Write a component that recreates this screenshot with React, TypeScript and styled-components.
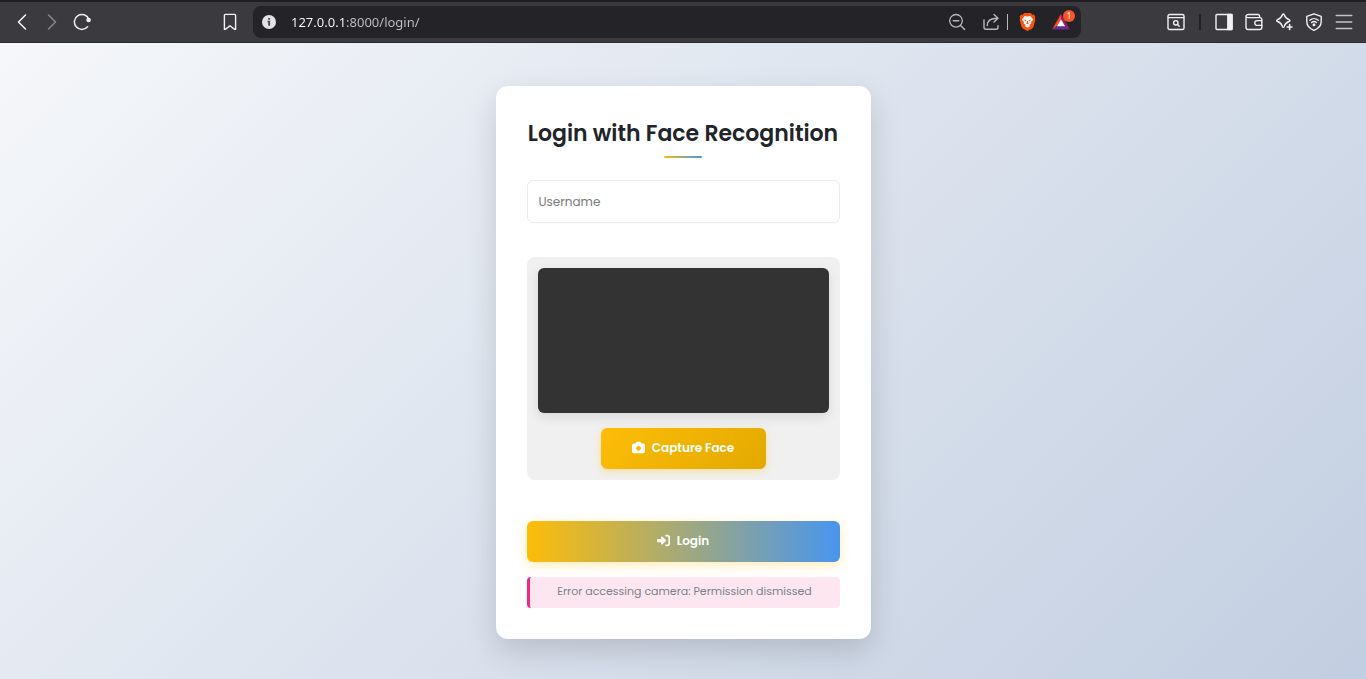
import React from "react";
import styled, { createGlobalStyle } from "styled-components";
import { FaCamera, FaRightToBracket } from "react-icons/fa6";

const GlobalStyle = createGlobalStyle`
  *, *::before, *::after { box-sizing: border-box; }
  body { margin: 0; font-family: Poppins, Inter, sans-serif; }
  button, input { font: inherit; }
`;

const Window = styled.div`
  min-height: 100vh;
  display: flex;
  flex-direction: column;
`;

const Toolbar = styled.header`
  display: grid;
  grid-template-columns: minmax(180px, 253fr) minmax(0, 828fr) minmax(240px, 285fr);
  align-items: center;
  height: 43px;
  padding-bottom: 1px;
  background: #3b3a3f;
  border-top: 2px solid #1f1e23;
  border-bottom: 1px solid #2c2b30;
`;

const ToolGroup = styled.div<{ $side: "left" | "right" }>`
  display: flex;
  align-items: center;
  justify-content: ${(p) => (p.$side === "left" ? "flex-start" : "flex-end")};
  padding: ${(p) => (p.$side === "left" ? "0 8px 0 7px" : "0 7px 0 8px")};
`;

const Spacer = styled.span`
  flex: 1;
`;

const ToolButton = styled.button<{ $dim?: boolean }>`
  display: flex;
  align-items: center;
  justify-content: center;
  width: 30px;
  height: 30px;
  padding: 0;
  border: 0;
  background: none;
  color: ${(p) => (p.$dim ? "#85848a" : "#f1f1f4")};
`;

const ToolDivider = styled.span`
  width: 2px;
  height: 16px;
  margin: 0 8px;
  background: #222126;
`;

const AddressBar = styled.div`
  display: flex;
  align-items: center;
  height: 32px;
  padding: 0 11px 0 8px;
  border-radius: 8px;
  background: #242328;
`;

const AddressButton = styled.button<{ $gap?: number }>`
  position: relative;
  display: flex;
  flex: none;
  padding: 0;
  margin-left: ${(p) => p.$gap ?? 0}px;
  border: 0;
  background: none;
  color: #b9b8be;
`;

const AddressInput = styled.input`
  flex: 1;
  min-width: 0;
  margin-left: 14px;
  padding: 0;
  border: 0;
  outline: 0;
  font-family: "Noto Sans", sans-serif;
  font-size: 13px;
  line-height: 20px;
  color: #ffffff;
  background: linear-gradient(90deg, #ffffff 53px, #c3c2c8 53px);
  -webkit-background-clip: text;
  background-clip: text;
  -webkit-text-fill-color: transparent;
`;

const AddressDivider = styled.span`
  width: 1px;
  height: 16px;
  margin-left: 7px;
  background: #b9b8be;
`;

const Badge = styled.span`
  position: absolute;
  top: -4px;
  right: -5px;
  width: 12px;
  height: 12px;
  border-radius: 6px;
  background: #fb542b;
  color: #ffffff;
  font-family: "Noto Sans", sans-serif;
  font-size: 8px;
  line-height: 12px;
  text-align: center;
`;

const Page = styled.main`
  flex: 1;
  display: flex;
  justify-content: center;
  align-items: flex-start;
  padding: 43px 20px 40px;
  background: linear-gradient(135deg, #f5f7fa 0%, #c2cee1 100%);
`;

const Card = styled.form`
  width: 100%;
  max-width: 375px;
  padding: 31px;
  border-radius: 12px;
  background: #ffffff;
  box-shadow: 0 12px 31px rgba(0, 0, 0, 0.15);
`;

const Title = styled.h1`
  display: flex;
  flex-direction: column;
  align-items: center;
  gap: 5px;
  margin: 0 0 22px;
  font-size: 22px;
  font-weight: 600;
  line-height: 34px;
  white-space: nowrap;
  color: #212529;

  &::after {
    content: "";
    width: 38px;
    height: 2px;
    border-radius: 2px;
    background: linear-gradient(to right, #fdbd08, #4895ef);
  }
`;

const Field = styled.input`
  display: block;
  width: 100%;
  height: 43px;
  padding: 0 11px;
  border: 1px solid #e9ebec;
  border-radius: 6px;
  outline: 0;
  background: #ffffff;
  font-size: 12px;
  color: #212529;

  &::placeholder { color: #7b7b7b; opacity: 1; }
`;

const CameraPanel = styled.section`
  display: flex;
  flex-direction: column;
  align-items: center;
  gap: 15px;
  margin: 34px 0 41px;
  padding: 11px;
  border-radius: 8px;
  background: #f0f0f0;
`;

const Preview = styled.video`
  display: block;
  width: 100%;
  height: 145px;
  border-radius: 6px;
  background: #333333;
  box-shadow: 0 4px 12px rgba(0, 0, 0, 0.1);
`;

const ActionButton = styled.button<{ $wide?: boolean }>`
  display: flex;
  align-items: center;
  justify-content: center;
  gap: 7px;
  width: ${(p) => (p.$wide ? "100%" : "165px")};
  height: 41px;
  padding: 0 0 2px;
  border: 0;
  border-radius: 6px;
  font-size: 12px;
  font-weight: 600;
  color: #ffffff;
  background: ${(p) =>
    p.$wide
      ? "linear-gradient(to right, #fdbd08, #4895ef)"
      : "linear-gradient(135deg, #fdbd08, #e3a900)"};
  box-shadow: ${(p) =>
    p.$wide
      ? "0 3px 12px rgba(253, 189, 8, 0.3)"
      : "0 3px 8px rgba(253, 189, 8, 0.3)"};
`;

const ErrorMessage = styled.p`
  margin: 15px 0 0;
  padding: 0 8px 2px;
  border-left: 3px solid #f72585;
  border-radius: 4px;
  background: #fde6f0;
  font-size: 11px;
  line-height: 29px;
  text-align: center;
  color: #7a828a;
`;

type DrawingProps = { size?: number; children: React.ReactNode };

const Line = ({ size = 18, children }: DrawingProps) => (
  <svg
    width={size}
    height={size}
    viewBox="0 0 18 18"
    fill="none"
    stroke="currentColor"
    strokeWidth="1.4"
    strokeLinecap="round"
    strokeLinejoin="round"
    aria-hidden="true"
  >
    {children}
  </svg>
);

export default function App() {
  return (
    <>
      <GlobalStyle />
      <Window>
        <Toolbar>
          <ToolGroup $side="left">
            <ToolButton aria-label="Back">
              <Line><path d="M12.5 2 5.500 9l7 7" strokeWidth="1.6" /></Line>
            </ToolButton>
            <ToolButton aria-label="Forward" $dim>
              <Line><path d="m5.500 2 7 7-7 7" strokeWidth="1.6" /></Line>
            </ToolButton>
            <ToolButton aria-label="Reload">
              <Line>
                <path d="M14.600 13.800A7.500 7.500 0 1 1 15.800 6" strokeWidth="1.5" />
                <circle cx="15.600" cy="7" r="1.600" fill="currentColor" />
              </Line>
            </ToolButton>
            <Spacer />
            <ToolButton aria-label="Bookmark this page">
              <Line><path d="M3.4 2.6c0-.7.5-1.2 1.2-1.2h8.8c.7 0 1.2.5 1.2 1.2v13.8h-1L9 12.8l-4.6 3.6h-1z" /></Line>
            </ToolButton>
          </ToolGroup>

          <AddressBar>
            <AddressButton type="button" aria-label="Site information">
              <svg width="16" height="16" viewBox="0 0 16 16" aria-hidden="true">
                <circle cx="8" cy="8" r="7" fill="#e3e2e7" />
                <path d="M7.2 4h1.9v1.7H7.2zM6.5 6.8h2.6v5H7.2V8.2h-.7z" fill="#4b4a50" />
              </svg>
            </AddressButton>
            <AddressInput aria-label="Address" type="text" defaultValue="127.0.0.1:8000/login/" />
            <AddressButton type="button" aria-label="Zoom">
              <Line>
                <circle cx="8" cy="7.8" r="6.3" strokeWidth="1.3" />
                <path d="M5.3 7.8h5.4M12.6 12.4l4 4" />
              </Line>
            </AddressButton>
            <AddressButton type="button" aria-label="Share" $gap={16}>
              <Line>
                <path d="M2 7v7.2c0 1.3.8 2 2 2h10c1.2 0 2-.7 2-2v-1.4" />
                <path d="M5.2 12.6c0-4.8 3-7.4 10.4-7.4M12 1.6l4 3.6-4 3.8" />
              </Line>
            </AddressButton>
            <AddressDivider />
            <AddressButton type="button" aria-label="Brave Shields" $gap={11}>
              <svg width="17" height="18" viewBox="0 0 17 18" aria-hidden="true">
                <path d="M5.3 0h6.4l1.6 1.7 1.5-.1 1.5 2-.5 1.5.6 1.7-2 7.1-1.6 1.8L8.5 18l-4.3-2.3-1.6-1.8-2-7.1.6-1.7-.5-1.5 1.5-2 1.5.1z" fill="#fb5410" />
                <path d="M5.8 3 8.5 3.5 11.2 3l2.9 3.4-2 2.7.2 1.2-2.1 1.6 1 1.1-2.7 1.8-2.7-1.8 1-1.1-2.1-1.6.2-1.2-2-2.7z" fill="#fff" />
                <path d="m4.6 6.5 2.6.6-.4 1.5zM12.4 6.5l-2.6.6.4 1.5zM8 8h1v1.600l1 .7-1.5.9-1.5-.9 1-.7z" fill="#fb5410" />
              </svg>
            </AddressButton>
            <AddressButton type="button" aria-label="Brave Rewards, 1 notification" $gap={16}>
              <svg width="18" height="16" viewBox="0 0 18 16" aria-hidden="true">
                <path d="M9 0v5.4L5 12l-5 3.6z" fill="#ff4724" />
                <path d="m9 0 9 15.6-5-3.6L9 5.4z" fill="#9e1f63" />
                <path d="M0 15.6 5 12h8l5 3.6z" fill="#662d91" />
                <path d="m9 5.2 4.1 7H4.9z" fill="#fff" />
              </svg>
              <Badge>1</Badge>
            </AddressButton>
          </AddressBar>

          <ToolGroup $side="right">
            <ToolButton aria-label="Search tabs">
              <Line>
                <rect x="1" y="1.5" width="16" height="15" rx="1.6" />
                <path d="M1.2 4.6h15.6" />
                <circle cx="8.8" cy="9.8" r="2.2" />
                <path d="m10.6 11.6 1.6 1.6" />
              </Line>
            </ToolButton>
            <ToolDivider />
            <ToolButton aria-label="Side panel">
              <Line>
                <rect x="1" y="1.5" width="16" height="15" rx="1" />
                <path d="M12.8 1.5H17v15h-4.2z" fill="currentColor" />
              </Line>
            </ToolButton>
            <ToolButton aria-label="Wallet">
              <Line>
                <path d="M14.600 4.600V3.200c0-1-.7-1.700-1.700-1.700H3.400C2.100 1.500 1 2.200 1 3.400v10.800c0 1.300.9 2.300 2.200 2.300h11.400c1.300 0 2.200-.8 2.200-2V6.600c0-1.200-.9-2-2.200-2H3C1.900 4.600 1.200 4.100 1 3.300" />
                <path d="M16.800 7.600h-4.600a2.400 2.400 0 0 0 0 4.800h4.600" />
              </Line>
            </ToolButton>
            <ToolButton aria-label="Leo AI">
              <Line>
                <path d="M8.300 1c.5 0 .7.300.9.800 1 3 1.800 3.800 4.800 4.900 1.300.5 1.300 1.300 0 1.800-3 1.100-3.800 1.900-4.800 4.900-.5 1.300-1.300 1.300-1.800 0-1-3-1.800-3.800-4.800-4.900-1.300-.5-1.300-1.300 0-1.800 3-1.100 3.800-1.900 4.800-4.900.2-.5.400-.8.900-.8z" />
                <path d="M14.600 11.600v4.800M12.200 14H17" strokeWidth="1.6" />
              </Line>
            </ToolButton>
            <ToolButton aria-label="VPN">
              <Line>
                <path d="m9 .8 7.200 2.500v5.500c0 4-2.600 6.700-7.200 8.600-4.600-1.900-7.200-4.600-7.200-8.600V3.300z" />
                <path d="M4.800 7.200a6.400 6.400 0 0 1 8.400 0M6.600 9.500a3.700 3.700 0 0 1 4.800 0" />
                <circle cx="9" cy="11.800" r=".8" fill="currentColor" />
              </Line>
            </ToolButton>
            <ToolButton aria-label="Menu">
              <Line><path d="M1.200 2.500h15.600M1.200 9h15.600M1.200 15.500h15.600" stroke="#c4c3c8" /></Line>
            </ToolButton>
          </ToolGroup>
        </Toolbar>

        <Page>
          <Card onSubmit={(event) => event.preventDefault()}>
            <Title>Login with Face Recognition</Title>
            <Field type="text" name="username" aria-label="Username" placeholder="Username" />
            <CameraPanel aria-label="Camera">
              <Preview />
              <ActionButton type="button">
                <FaCamera size={13} aria-hidden="true" />
                Capture Face
              </ActionButton>
            </CameraPanel>
            <ActionButton type="submit" $wide>
              <FaRightToBracket size={13} aria-hidden="true" />
              Login
            </ActionButton>
            <ErrorMessage role="alert">Error accessing camera: Permission dismissed</ErrorMessage>
          </Card>
        </Page>
      </Window>
    </>
  );
}
